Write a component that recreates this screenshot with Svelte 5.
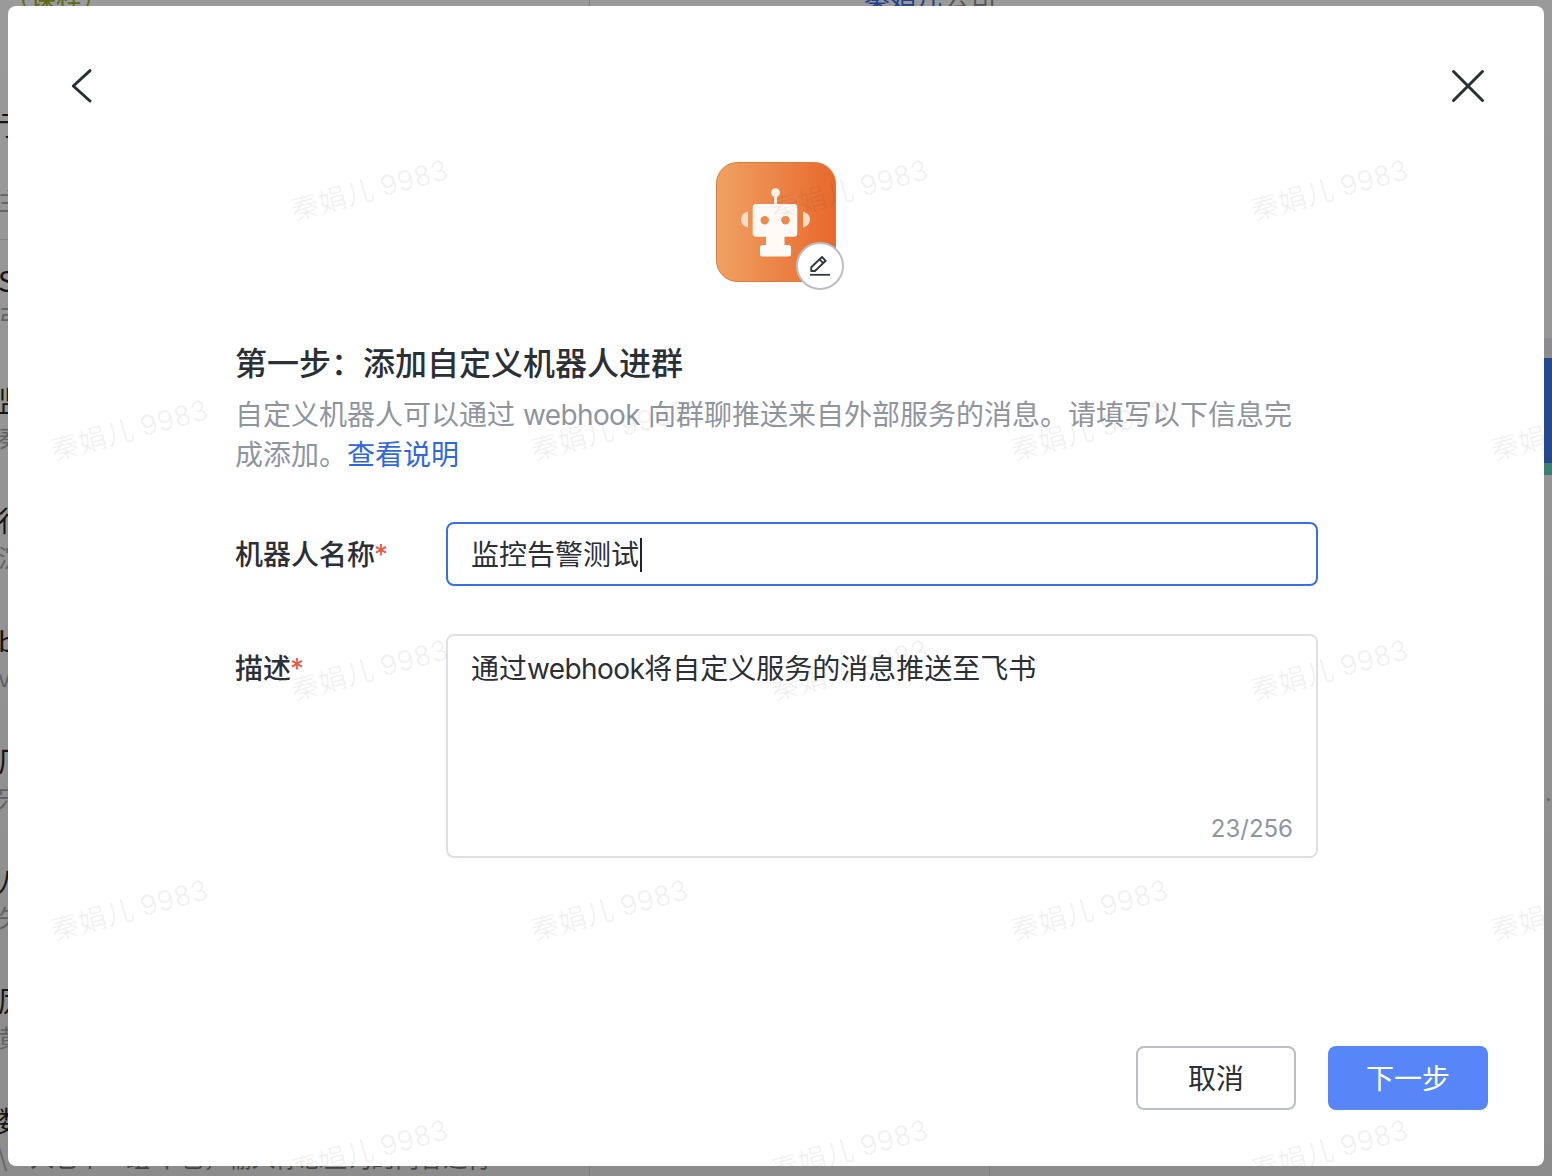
<script>
  const rows = [
    ['亍', '主'], ['S', '弓'], ['监', '秦'], ['行', '沉'], ['b', 'v'],
    ['厂', '宍'], ['八', '矢'], ['厉', '黄'], ['数', '\\']
  ];
  const marks = [];
  for (let r = 0; r < 5; r++) {
    const y = 170 + r * 240 - 6;
    const even = r % 2 === 0;
    for (let c = 0; c < 4; c++) {
      const x = (even ? 289 : 49) + c * 480 - 8;
      marks.push({ x, y });
    }
  }
</script>

<div class="page">
  <div class="behind">
    <div class="top-strip">
      <span class="course">（课程）</span>
      <span class="owner">秦娟儿</span>
      <span class="company">公司</span>
    </div>
    <div class="list">
      {#each rows as row}
        <div class="row">
          <div class="row-title">{row[0]}</div>
          <div class="row-desc">{row[1]}</div>
        </div>
      {/each}
    </div>
    <div class="divider"></div>
    <div class="col-line one"></div>
    <div class="col-line two"></div>
    <div class="bottom-text">入它个一组 下也，输入你想查询的内容进行</div>
    <div class="edge">
      <div class="edge-grey"></div>
      <div class="edge-blue"></div>
      <div class="edge-green"></div>
    </div>
    <div class="edge-dot"></div>
  </div>

  <div class="modal">
    <header class="bar">
      <button class="icon-btn" aria-label="返回">
        <svg width="40" height="40" viewBox="0 0 40 40" fill="none">
          <path d="M26 4.700 9.300 20 26 35" stroke="#2b2f36" stroke-width="3" stroke-linecap="round" stroke-linejoin="round" />
        </svg>
      </button>
      <button class="icon-btn" aria-label="关闭">
        <svg width="40" height="40" viewBox="0 0 40 40" fill="none">
          <path d="M5.500 5.500 34.500 34.500M34.500 5.500 5.500 34.500" stroke="#2b2f36" stroke-width="3" stroke-linecap="round" />
        </svg>
      </button>
    </header>

    <div class="avatar-wrap">
      <div class="avatar">
        <svg width="120" height="120" viewBox="0 0 120 120">
          <defs>
            <linearGradient id="bot" x1="0" x2="1" y1="0" y2="0">
              <stop offset="0" stop-color="#f0a263" />
              <stop offset="1" stop-color="#e8682c" />
            </linearGradient>
          </defs>
          <rect x="0.500" y="0.500" width="119" height="119" rx="21" fill="url(#bot)" stroke="#dd7a3c" />
          <circle cx="59.500" cy="30.700" r="4.400" fill="#fdf3ea" />
          <rect x="58" y="33" width="3" height="10" fill="#fdf3ea" />
          <rect x="36.700" y="42" width="44.600" height="32.700" rx="3.500" fill="#fffaf6" />
          <circle cx="48.700" cy="58.300" r="4.200" fill="#ea8a4d" />
          <circle cx="69.500" cy="58.300" r="4.200" fill="#ea8a4d" />
          <path d="M32 49.500C27.500 50.500 25 54 25 57.500S27.500 64.500 32 65.500Z" fill="#fbdcc6" />
          <path d="M87 49.500C91.500 50.500 94 54 94 57.500S91.500 64.500 87 65.500Z" fill="#fbdcc6" />
          <rect x="50" y="74" width="18.500" height="11" fill="#fffaf6" />
          <rect x="44" y="83" width="31" height="11.500" rx="2.500" fill="#fffaf6" />
        </svg>
        <div class="edit-badge">
          <svg width="24" height="24" viewBox="0 0 24 24" fill="none">
            <path d="M3.200 17H7L17.700 6.800 14 3 3.200 13.200Z" stroke="#33373d" stroke-width="1.900" stroke-linejoin="round" />
            <path d="M11.600 5.400 15.200 9.100" stroke="#33373d" stroke-width="1.900" />
            <path d="M2 20.800H22" stroke="#33373d" stroke-width="1.800" />
          </svg>
        </div>
      </div>
    </div>

    <section class="content">
      <h2 class="title">第一步：添加自定义机器人进群</h2>
      <p class="intro">自定义机器人可以通过 <span class="latin">webhook</span> 向群聊推送来自外部服务的消息。请填写以下信息完成添加。<a class="link" href="#help">查看说明</a></p>

      <div class="field name-field">
        <div class="label">机器人名称<span class="req">*</span></div>
        <div class="input focused"><span>监控告警测试</span><i class="caret"></i></div>
      </div>

      <div class="field desc-field">
        <div class="label">描述<span class="req">*</span></div>
        <div class="textarea">
          <div>通过<span class="latin">webhook</span>将自定义服务的消息推送至飞书</div>
          <div class="count">23/256</div>
        </div>
      </div>
    </section>

    <footer class="foot">
      <button class="btn cancel">取消</button>
      <button class="btn next">下一步</button>
    </footer>

    <div class="marks">
      {#each marks as m}
        <span class="mark" style="left:{m.x}px;top:{m.y}px">秦娟儿 9983</span>
      {/each}
    </div>
  </div>
</div>

<style>
  :global(body) {
    margin: 0;
    background: #979797;
  }
  .page {
    position: relative;
    width: 1552px;
    height: 1176px;
    overflow: hidden;
    background: linear-gradient(#9a9a9a, #8c8c8c);
    font-family: Inter, "Noto Sans CJK SC", sans-serif;
    color: #2b2f36;
    box-sizing: border-box;
    padding: 6px 8px 10px;
  }
  .behind {
    position: absolute;
    inset: 0;
    font-family: "Noto Sans CJK SC", sans-serif;
  }
  .top-strip {
    position: absolute;
    top: -18px;
    left: 0;
    right: 0;
    height: 24px;
    overflow: hidden;
    font-size: 26px;
    line-height: 30px;
  }
  .course {
    position: absolute;
    left: 4px;
    color: #5f6a14;
  }
  .owner {
    position: absolute;
    left: 864px;
    color: #23408c;
  }
  .company {
    position: absolute;
    left: 944px;
    color: #555;
  }
  .list {
    position: absolute;
    top: 104px;
    left: 0;
    width: 8px;
    overflow: hidden;
  }
  .row {
    height: 120px;
    width: 60px;
    box-sizing: border-box;
  }
  .row:first-child {
    height: 156px;
  }
  .row:first-child .row-desc {
    margin-top: 39px;
  }
  .row-title {
    font-size: 28px;
    line-height: 40px;
    color: #141414;
    margin-left: -2px;
  }
  .row-desc {
    font-size: 24px;
    line-height: 34px;
    color: #5f6166;
    margin-left: -2px;
  }
  .divider {
    position: absolute;
    left: 0;
    top: 239px;
    width: 8px;
    height: 1px;
    background: #848484;
  }
  .col-line {
    position: absolute;
    width: 1px;
    background: #7d7d7d;
  }
  .col-line.one {
    left: 589px;
    top: 0;
    bottom: 0;
  }
  .col-line.two {
    left: 989px;
    top: 1166px;
    bottom: 0;
  }
  .bottom-text {
    position: absolute;
    left: 30px;
    top: 1142px;
    font-size: 24px;
    line-height: 30px;
    color: #444;
    white-space: nowrap;
  }
  .edge {
    position: absolute;
    left: 1544px;
    top: 338px;
    width: 8px;
  }
  .edge-grey {
    height: 20px;
    background: #8b8b90;
  }
  .edge-blue {
    height: 105px;
    background: #26488f;
  }
  .edge-green {
    height: 12px;
    background: #3b7f70;
  }
  .edge-dot {
    position: absolute;
    left: 1547px;
    top: 798px;
    width: 3px;
    height: 3px;
    border-radius: 50%;
    background: #666;
  }
  .modal {
    position: relative;
    width: 1536px;
    height: 1160px;
    background: #fff;
    border-radius: 8px;
    overflow: hidden;
    display: flex;
    flex-direction: column;
    box-sizing: border-box;
    padding: 60px 56px 56px;
  }
  .bar {
    display: flex;
    justify-content: space-between;
    height: 40px;
  }
  .icon-btn {
    width: 40px;
    height: 40px;
    padding: 0;
    border: 0;
    background: none;
    display: block;
  }
  .icon-btn svg {
    display: block;
  }
  .avatar-wrap {
    display: flex;
    justify-content: center;
    margin-top: 56px;
  }
  .avatar {
    position: relative;
    width: 120px;
    height: 120px;
  }
  .avatar > svg {
    display: block;
  }
  .edit-badge {
    position: absolute;
    left: 80px;
    top: 80px;
    width: 48px;
    height: 48px;
    box-sizing: border-box;
    border: 2px solid #bbbfc4;
    border-radius: 50%;
    background: #fff;
    display: flex;
    align-items: center;
    justify-content: center;
  }
  .content {
    width: 1083px;
    margin: 57px 0 0 171px;
    flex: 1;
  }
  .title {
    margin: 0;
    font-size: 32px;
    line-height: 44px;
    font-weight: 500;
    color: #2b2f36;
    font-family: "Noto Sans CJK SC", sans-serif;
  }
  .intro {
    margin: 12px 0 0;
    max-width: 1070px;
    font-size: 28px;
    line-height: 40px;
    color: #8f959e;
  }
  .latin {
    letter-spacing: -0.6px;
  }
  .link {
    color: #2f68e0;
    text-decoration: none;
  }
  .field {
    display: flex;
  }
  .name-field {
    margin-top: 47px;
    align-items: center;
  }
  .desc-field {
    margin-top: 48px;
    align-items: flex-start;
  }
  .label {
    width: 211px;
    flex: none;
    font-size: 28px;
    line-height: 40px;
    font-weight: 500;
    color: #2b2f36;
    font-family: "Noto Sans CJK SC", sans-serif;
  }
  .desc-field .label {
    margin-top: 13px;
  }
  .req {
    color: #e8564a;
    font-family: Inter, sans-serif;
    font-weight: 400;
    margin-left: -1px;
  }
  .input,
  .textarea {
    flex: 1;
    box-sizing: border-box;
    border-radius: 8px;
    font-size: 28px;
    line-height: 40px;
    color: #2b2f36;
  }
  .input {
    height: 64px;
    border: 2px solid #3a6fe8;
    display: flex;
    align-items: center;
    padding: 2px 24px 0 23px;
  }
  .caret {
    display: block;
    width: 2px;
    height: 34px;
    background: #1f2329;
    margin-left: 1px;
  }
  .textarea {
    position: relative;
    height: 224px;
    border: 2px solid #dee0e3;
    padding: 13px 24px 12px 23px;
  }
  .count {
    position: absolute;
    right: 23px;
    bottom: 10px;
    font-size: 24px;
    line-height: 34px;
    color: #8f959e;
  }
  .foot {
    display: flex;
    justify-content: flex-end;
    gap: 32px;
  }
  .btn {
    width: 160px;
    height: 64px;
    box-sizing: border-box;
    border-radius: 8px;
    font-size: 28px;
    font-family: "Noto Sans CJK SC", sans-serif;
    padding: 0 0 2px;
  }
  .cancel {
    background: #fff;
    border: 2px solid #bbbfc4;
    color: #2b2f36;
  }
  .next {
    background: #5786f8;
    border: 0;
    color: #fff;
  }
  .marks {
    position: absolute;
    inset: 0;
    pointer-events: none;
  }
  .mark {
    position: absolute;
    font-size: 28px;
    line-height: 40px;
    white-space: nowrap;
    color: rgba(31, 35, 41, 0.065);
    transform: rotate(-15deg);
    transform-origin: center;
  }
</style>
